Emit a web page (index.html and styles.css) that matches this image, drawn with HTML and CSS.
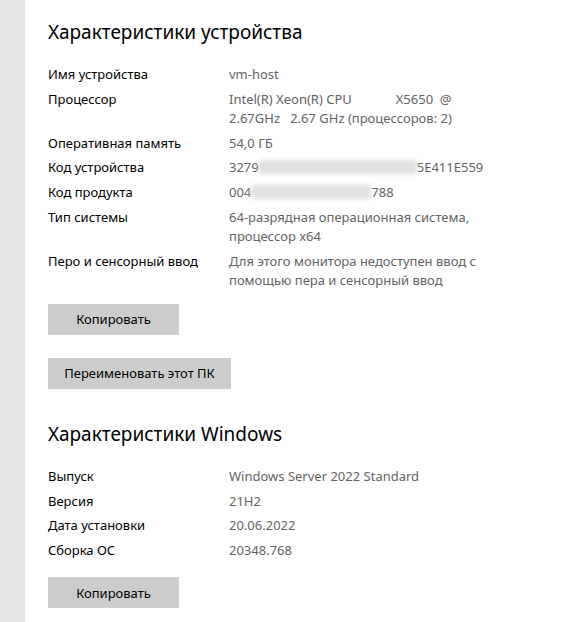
FILE: index.html
```html
<!DOCTYPE html>
<html lang="ru">
<head>
  <meta charset="utf-8">
  <title>О системе</title>
  <link rel="stylesheet" href="styles.css">
</head>
<body>
  <div class="layout">
    <div class="sidebar"></div>

    <div class="content">
      <!-- Характеристики устройства -->
      <h2>Характеристики устройства</h2>
      <dl class="specs">
        <div class="row"><dt>Имя устройства</dt><dd>vm-host</dd></div>
        <div class="row"><dt>Процессор</dt><dd class="pre">Intel(R) Xeon(R) CPU             X5650  @<br>2.67GHz   2.67 GHz (процессоров: 2)</dd></div>
        <div class="row"><dt>Оперативная память</dt><dd>54,0 ГБ</dd></div>
        <div class="row"><dt>Код устройства</dt><dd>3279<span class="blur wide"></span>5E411E559</dd></div>
        <div class="row"><dt>Код продукта</dt><dd>004<span class="blur narrow"></span>788</dd></div>
        <div class="row"><dt>Тип системы</dt><dd>64-разрядная операционная система,<br>процессор x64</dd></div>
        <div class="row"><dt>Перо и сенсорный ввод</dt><dd>Для этого монитора недоступен ввод с<br>помощью пера и сенсорный ввод</dd></div>
      </dl>
      <button class="btn copy">Копировать</button>
      <button class="btn rename">Переименовать этот ПК</button>

      <!-- Характеристики Windows -->
      <h2>Характеристики Windows</h2>
      <dl class="specs">
        <div class="row"><dt>Выпуск</dt><dd>Windows Server 2022 Standard</dd></div>
        <div class="row"><dt>Версия</dt><dd>21H2</dd></div>
        <div class="row"><dt>Дата установки</dt><dd>20.06.2022</dd></div>
        <div class="row"><dt>Сборка ОС</dt><dd>20348.768</dd></div>
      </dl>
      <button class="btn copy last">Копировать</button>
    </div>
  </div>
</body>
</html>
```

FILE: styles.css
```css
html, body {
  margin: 0;
  height: 100%;
  background: #fff;
  font-family: "Noto Sans", "Open Sans", sans-serif;
  color: #000;
}

.layout {
  display: flex;
  min-height: 100%;
}

.sidebar {
  width: 25px;
  flex-shrink: 0;
  background: #e6e6e6;
}

.content {
  padding: 19px 0 0 23px;
  display: flex;
  flex-direction: column;
  align-items: flex-start;
}

h2 {
  margin: 0 0 20px;
  font-size: 19px;
  font-weight: 400;
  line-height: 26px;
  color: #000;
}

.specs {
  margin: 0;
  display: flex;
  flex-direction: column;
  gap: 5px;
}

.row {
  display: flex;
  font-size: 13px;
  line-height: 19.6px;
}

dt {
  width: 181px;
  flex-shrink: 0;
  color: #000;
}

dd {
  margin: 0;
  color: #636363;
}

.pre {
  white-space: pre;
}

.blur {
  display: inline-block;
  height: 14px;
  vertical-align: -2px;
  background: #e0e0e0;
  filter: blur(2px);
}

.blur.wide {
  width: 158px;
}

.blur.narrow {
  width: 120px;
}

.btn {
  border: none;
  background: #cccccc;
  color: #000;
  font-family: inherit;
  font-size: 13px;
  height: 31px;
  padding: 0 14px;
  cursor: pointer;
}

.btn.copy {
  width: 131px;
  margin-top: 13px;
}

.btn.copy.last {
  margin-top: 17px;
}

.btn.rename {
  width: 183px;
  margin-top: 23px;
  margin-bottom: 32px;
}
```
